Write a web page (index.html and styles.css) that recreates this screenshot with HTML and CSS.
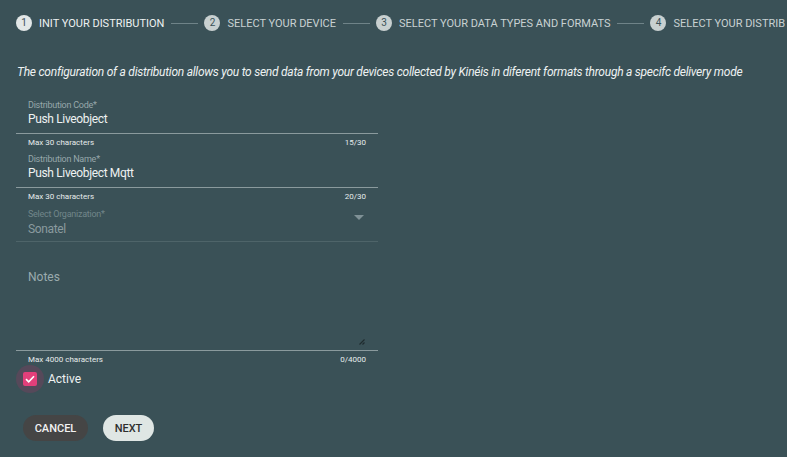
FILE: index.html
```html
<!DOCTYPE html>
<html>
<head>
<meta charset="utf-8">
<link rel="stylesheet" href="styles.css">
</head>
<body>
<div class="page">
  <div class="stepper">
    <div class="step active"><span class="num">1</span><span class="lbl">Init your distribution</span></div>
    <div class="conn"></div>
    <div class="step"><span class="num">2</span><span class="lbl">Select your device</span></div>
    <div class="conn"></div>
    <div class="step"><span class="num">3</span><span class="lbl">Select your data types and formats</span></div>
    <div class="conn"></div>
    <div class="step last"><span class="num">4</span><span class="lbl">Select your distrib</span></div>
  </div>

  <p class="intro">The configuration of a distribution allows you to send data from your devices collected by Kinéis in diferent formats through a specifc delivery mode</p>

  <div class="form">
    <div class="field">
      <div class="box">
        <div class="label">Distribution Code*</div>
        <div class="value">Push Liveobject</div>
      </div>
      <div class="hint"><span>Max 30 characters</span><span>15/30</span></div>
    </div>
    <div class="field">
      <div class="box">
        <div class="label">Distribution Name*</div>
        <div class="value">Push Liveobject Mqtt</div>
      </div>
      <div class="hint"><span>Max 30 characters</span><span>20/30</span></div>
    </div>
    <div class="field select">
      <div class="box">
        <div class="sel-text">
          <div class="label">Select Organization*</div>
          <div class="value">Sonatel</div>
        </div>
        <svg class="caret" width="10" height="5" viewBox="0 0 10 5"><path d="M0 0h10L5 5z" fill="#7f9196"/></svg>
      </div>
    </div>
    <div class="field notes">
      <div class="box">
        <div class="placeholder">Notes</div>
        <svg class="grip" width="7" height="7" viewBox="0 0 7 7"><path d="M6.5 1.5L1.5 6.5M6.5 4.5L4.5 6.5" stroke="#1f2b2e" stroke-width="1.2"/></svg>
      </div>
      <div class="hint"><span>Max 4000 characters</span><span>0/4000</span></div>
    </div>
  </div>

  <label class="check">
    <span class="halo"><span class="cb"><svg width="10" height="8" viewBox="0 0 10 8"><path d="M1 4.2L3.7 6.8L9 1.2" fill="none" stroke="#fff" stroke-width="1.6"/></svg></span></span>
    <span class="check-lbl">Active</span>
  </label>

  <div class="actions">
    <button class="btn cancel">Cancel</button>
    <button class="btn next">Next</button>
  </div>
</div>
</body>
</html>
```

FILE: styles.css
```css
html, body {
  margin: 0;
  padding: 0;
  background: #3a5157;
  font-family: Roboto, "Liberation Sans", sans-serif;
  color: #e6ecec;
  overflow: hidden;
}
.page {
  width: 787px;
  height: 457px;
  overflow: hidden;
}
.stepper {
  display: flex;
  align-items: center;
  padding: 15px 0 0 16px;
  height: 16px;
  white-space: nowrap;
}
.step {
  display: flex;
  align-items: center;
  flex: none;
}
.num {
  width: 16px;
  height: 16px;
  border-radius: 50%;
  background: #c8d0d0;
  color: #3a5157;
  font-size: 10px;
  line-height: 16px;
  text-align: center;
  margin-right: 7px;
  flex: none;
}
.step.active .num {
  background: #e2e7e7;
}
.lbl {
  text-transform: uppercase;
  font-size: 11px;
  letter-spacing: 0;
  color: #c9d2d3;
}
.step.active .lbl {
  color: #eef2f2;
}
.conn {
  width: 27px;
  height: 1px;
  background: #6f8388;
  margin: 0 6px 0 7px;
  flex: none;
}
.intro {
  margin: 34px 0 0 17px;
  font-size: 12px;
  font-style: italic;
  line-height: 14px;
  letter-spacing: -0.25px;
  color: #eef2f2;
  white-space: nowrap;
}
.form {
  width: 362px;
  margin: 19px 0 0 16px;
}
.field + .field {
  margin-top: 4px;
}
.box {
  padding: 1px 12px 6px;
  border-bottom: 1px solid #8a9a9d;
}
.label {
  font-size: 9px;
  line-height: 12px;
  letter-spacing: -0.25px;
  color: #97a8ab;
}
.value {
  font-size: 12px;
  line-height: 16px;
  letter-spacing: -0.35px;
  color: #eef2f2;
}
.hint {
  display: flex;
  justify-content: space-between;
  padding: 4px 12px 0;
  font-size: 8px;
  line-height: 10px;
  color: #e6ecec;
}
.field.select {
  margin-top: 5px;
}
.select .box {
  display: flex;
  align-items: center;
  justify-content: space-between;
  padding-bottom: 4px;
  border-bottom-color: #4e6469;
}
.select .value {
  margin-top: 1px;
  color: #8a9b9f;
}
.select .label {
  color: #71868a;
}
.caret {
  margin-right: 2px;
  margin-top: -10px;
}
.field.notes {
  margin-top: 0;
}
.notes .box {
  position: relative;
  height: 81px;
  padding-top: 27px;
  padding-bottom: 0;
}
.placeholder {
  font-size: 12px;
  line-height: 16px;
  color: #9aabae;
}
.grip {
  position: absolute;
  right: 13px;
  bottom: 5px;
}
.check {
  display: flex;
  align-items: center;
  margin: 0 0 0 16px;
  height: 28px;
}
.halo {
  width: 28px;
  height: 28px;
  border-radius: 50%;
  background: #56495a;
  display: flex;
  align-items: center;
  justify-content: center;
}
.cb {
  width: 14px;
  height: 14px;
  border-radius: 2px;
  background: #e43f7a;
  display: flex;
  align-items: center;
  justify-content: center;
}
.check-lbl {
  margin-left: 4px;
  font-size: 12px;
  color: #eef2f2;
}
.actions {
  display: flex;
  gap: 15px;
  margin: 22px 0 0 23px;
}
.btn {
  height: 26px;
  border: none;
  border-radius: 13px;
  font-family: Roboto, "Liberation Sans", sans-serif;
  font-weight: 500;
  font-size: 11px;
  text-transform: uppercase;
  padding: 0;
}
.cancel {
  width: 65px;
  background: #454545;
  color: #f2f2f2;
}
.next {
  width: 51px;
  background: #dfe6e4;
  color: #2e2e2e;
}
```
